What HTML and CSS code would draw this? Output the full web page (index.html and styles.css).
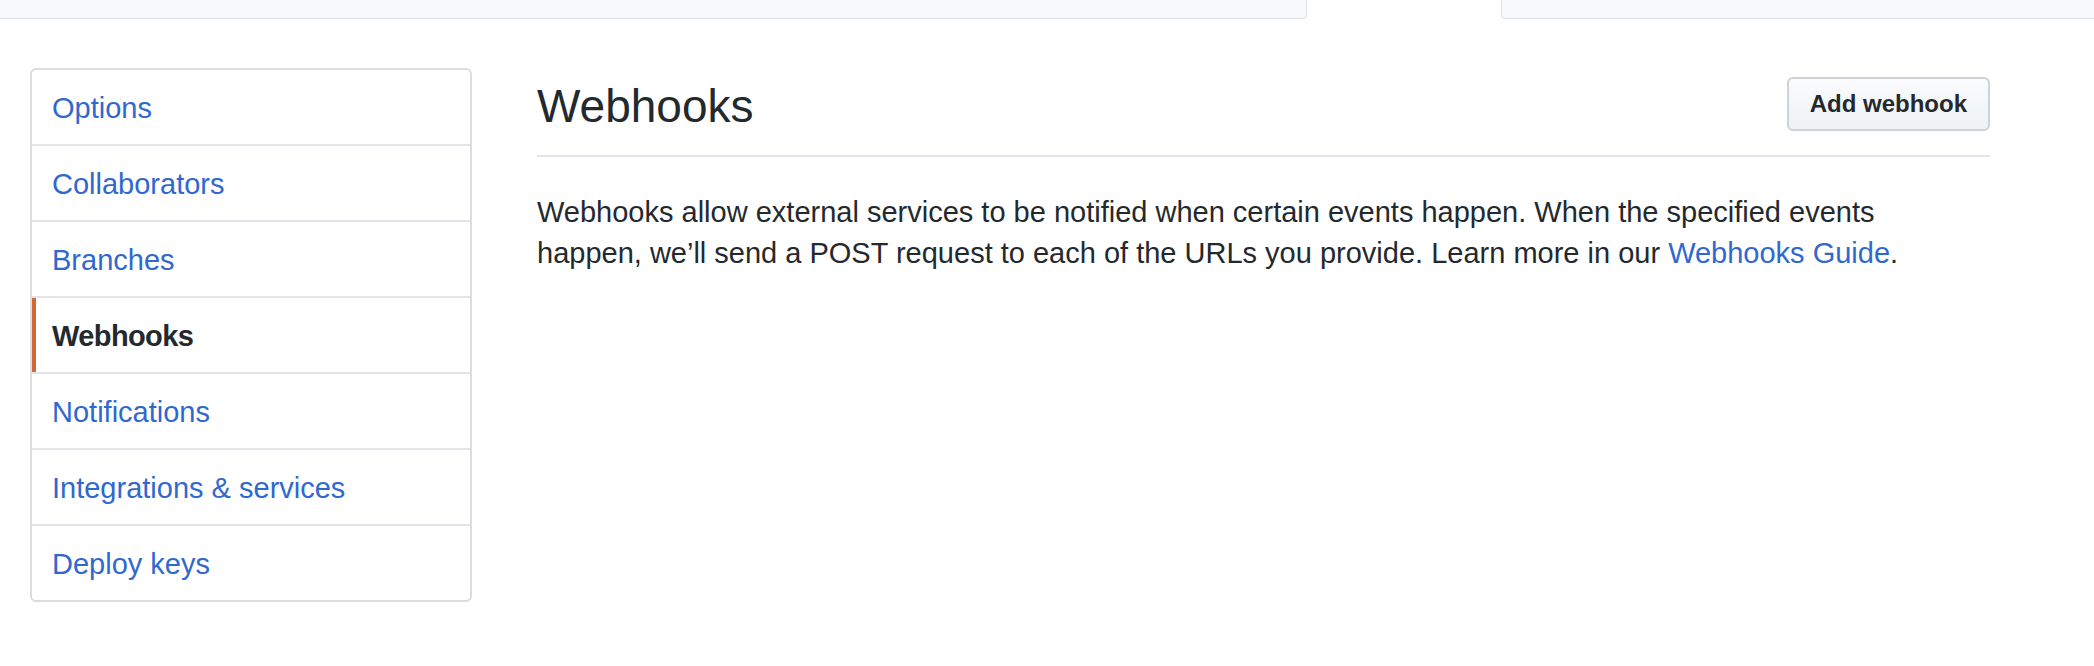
FILE: index.html
```html
<!DOCTYPE html>
<html lang="en">
<head>
<meta charset="utf-8">
<title>Webhooks · Settings</title>
<link rel="stylesheet" href="styles.css">
</head>
<body>
  <div class="tabstrip">
    <div class="tab-rest tab-rest-left"></div>
    <div class="tab-active"></div>
    <div class="tab-rest tab-rest-right"></div>
  </div>

  <div class="layout">
    <nav class="menu">
      <a class="menu-item" href="#">Options</a>
      <a class="menu-item" href="#">Collaborators</a>
      <a class="menu-item" href="#">Branches</a>
      <a class="menu-item selected" href="#">Webhooks</a>
      <a class="menu-item" href="#">Notifications</a>
      <a class="menu-item" href="#">Integrations &amp; services</a>
      <a class="menu-item" href="#">Deploy keys</a>
    </nav>

    <main class="main">
      <div class="subhead">
        <h2 class="subhead-heading">Webhooks</h2>
        <a class="btn" href="#">Add webhook</a>
      </div>
      <p class="intro">Webhooks allow external services to be notified when certain events happen. When the specified events<br>happen, we’ll send a POST request to each of the URLs you provide. Learn more in our <a class="link" href="#">Webhooks Guide</a>.</p>
    </main>
  </div>
</body>
</html>
```

FILE: styles.css
```css
html, body {
  margin: 0;
  padding: 0;
  background: #ffffff;
}

body {
  font-family: "Liberation Sans", Arial, "Helvetica Neue", sans-serif;
  color: #24292e;
}

a {
  text-decoration: none;
}

/* top strip: bottom of the repository tabs */
.tabstrip {
  display: flex;
  height: 19px;
}

.tab-rest {
  box-sizing: border-box;
  height: 19px;
  background: #f8f9fb;
  border-bottom: 1px solid #dfe2e6;
}

.tab-rest-left {
  flex: 0 0 1307px;
  border-right: 1px solid #dfe2e6;
  border-bottom-right-radius: 4px;
}

.tab-active {
  flex: 0 0 194px;
  background: #ffffff;
}

.tab-rest-right {
  flex: 1 1 auto;
  border-left: 1px solid #dfe2e6;
  border-bottom-left-radius: 4px;
}

/* page layout */
.layout {
  display: flex;
  align-items: flex-start;
  width: 1960px;
  margin-left: 30px;
  padding-top: 49px;
}

/* side menu */
.menu {
  flex: 0 0 442px;
  box-sizing: border-box;
  display: flex;
  flex-direction: column;
  border: 2px solid #d9dce0;
  border-radius: 6px;
  background: #ffffff;
  overflow: hidden;
}

.menu-item {
  position: relative;
  display: block;
  box-sizing: border-box;
  height: 76px;
  padding: 18px 20px 16px 20px;
  font-size: 29px;
  line-height: 40px;
  color: #3068cf;
  border-bottom: 2px solid #e1e4e8;
}

.menu-item:last-child {
  height: 74px;
  border-bottom: 0;
}

.menu-item.selected {
  color: #24292e;
  font-weight: 700;
  letter-spacing: -0.6px;
}

.menu-item.selected::before {
  content: "";
  position: absolute;
  left: 0;
  top: 0;
  bottom: 0;
  width: 4px;
  background: #d0693a;
}

/* main column */
.main {
  flex: 1 1 auto;
  margin-left: 65px;
  margin-top: 10px;
}

.subhead {
  display: flex;
  align-items: flex-start;
  justify-content: space-between;
  padding-bottom: 21px;
  border-bottom: 2px solid #e1e4e8;
}

.subhead-heading {
  margin: 0;
  font-size: 46px;
  line-height: 56px;
  font-weight: 400;
  color: #24292e;
}

.btn {
  display: inline-block;
  margin-top: -1px;
  padding: 10px 21px;
  font-size: 24px;
  line-height: 30px;
  font-weight: 700;
  color: #24292e;
  background: linear-gradient(#fafbfc, #eff3f6 90%);
  border: 2px solid #cfd3d8;
  border-radius: 6px;
}

.intro {
  margin: 35px 0 0 0;
  font-size: 29px;
  line-height: 41px;
  color: #24292e;
}

.link {
  color: #3068cf;
}
```
